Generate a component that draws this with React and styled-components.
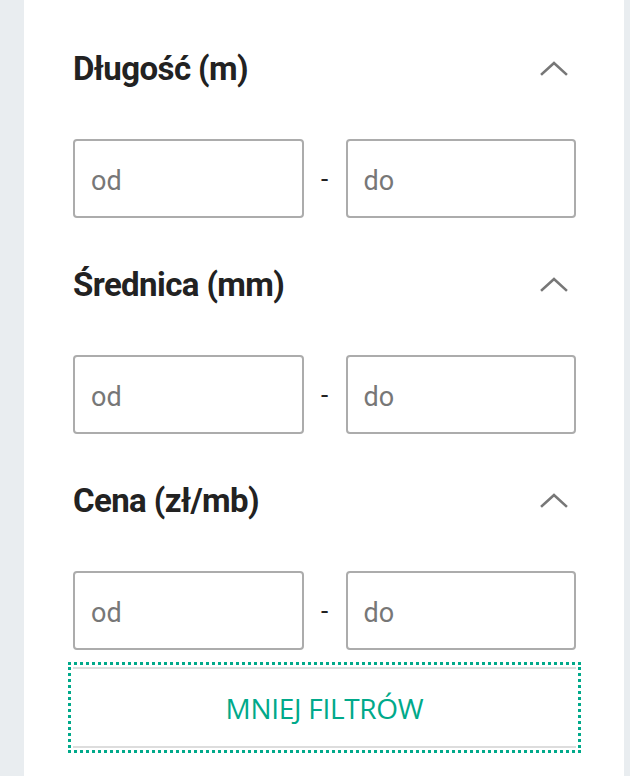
import React from 'react';
import styled, { createGlobalStyle } from 'styled-components';

const GlobalStyle = createGlobalStyle`
  html, body {
    margin: 0;
    padding: 0;
    background: #e9edf0;
  }
  body {
    font-family: Roboto, "Liberation Sans", sans-serif;
  }
`;

const Page = styled.div`
  display: flex;
  padding: 0 6px 0 24px;
  min-height: 776px;
`;

const Panel = styled.div`
  flex: 1;
  background: #ffffff;
  padding: 40px 48px 28px 49px;
  box-sizing: border-box;
`;

const Section = styled.section`
  display: flex;
  flex-direction: column;
  margin-bottom: ${p => (p.last ? '17px' : '38px')};
`;

const Header = styled.div`
  display: flex;
  align-items: center;
  justify-content: space-between;
  height: 56px;
  margin-bottom: 43px;
`;

const Title = styled.h3`
  margin: 0;
  font-family: Roboto, "Liberation Sans", sans-serif;
  font-weight: 700;
  font-size: 33px;
  letter-spacing: -0.6px;
  color: #222222;
`;

const Toggle = styled.button`
  display: flex;
  align-items: center;
  justify-content: center;
  width: 32px;
  height: 32px;
  margin-right: 6px;
  padding: 0;
  border: none;
  background: transparent;
  cursor: pointer;
`;

const Range = styled.div`
  display: grid;
  grid-template-columns: 1fr 42px 1fr;
  align-items: center;
`;

const Field = styled.input`
  box-sizing: border-box;
  width: 100%;
  height: 79px;
  border: 2px solid #acacac;
  border-radius: 4px;
  padding: 4px 16px 0;
  font-family: Roboto, "Liberation Sans", sans-serif;
  font-size: 27px;
  color: #333333;
  background: #ffffff;
  outline: none;

  &::placeholder {
    color: #777777;
  }
`;

const Dash = styled.span`
  text-align: center;
  font-size: 26px;
  color: #222222;
  line-height: 1;
  margin-top: 0;
`;

const LessButton = styled.button`
  display: block;
  box-sizing: border-box;
  width: 100%;
  height: 81px;
  margin: 0;
  border: none;
  border-top: 2px solid #dddddd;
  border-bottom: 2px solid #dddddd;
  background: #ffffff;
  outline: 3px dotted #00a98a;
  outline-offset: 2px;
  font-family: "Open Sans", "Liberation Sans", sans-serif;
  font-size: 28px;
  letter-spacing: -0.3px;
  color: #00a98a;
  text-transform: uppercase;
  cursor: pointer;
`;

const Chevron = () => (
  <svg width="28" height="16" viewBox="0 0 28 16" fill="none">
    <polyline
      points="2,14 14,3 26,14"
      stroke="#777777"
      strokeWidth="2.6"
      strokeLinecap="square"
    />
  </svg>
);

const filters = ['Długość (m)', 'Średnica (mm)', 'Cena (zł/mb)'];

const App = () => {
  return (
    <>
      <GlobalStyle />
      <Page>
        <Panel>
          {filters.map((name, i) => (
            <Section key={name} last={i === filters.length - 1}>
              <Header>
                <Title>{name}</Title>
                <Toggle aria-label="Zwiń">
                  <Chevron />
                </Toggle>
              </Header>
              <Range>
                <Field placeholder="od" />
                <Dash>-</Dash>
                <Field placeholder="do" />
              </Range>
            </Section>
          ))}
          <LessButton>Mniej filtrów</LessButton>
        </Panel>
      </Page>
    </>
  );
};

export default App;
